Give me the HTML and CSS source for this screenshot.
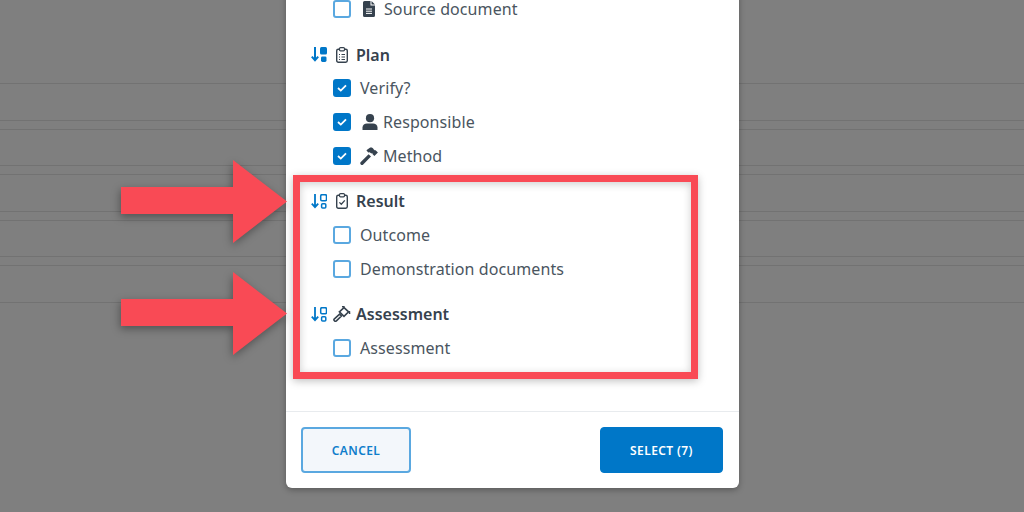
FILE: index.html
```html
<!DOCTYPE html>
<html lang="en">
<head>
<meta charset="utf-8">
<title>Select columns</title>
<link rel="stylesheet" href="styles.css">
</head>
<body>
<div class="backdrop">
  <div class="row row-a"></div><div class="row row-b"></div>
  <div class="row row-a"></div><div class="row row-b"></div>
  <div class="row row-a"></div><div class="row row-b"></div>
  <div class="row row-a"></div><div class="row row-b"></div>
  <div class="row row-a"></div><div class="row row-b"></div>
</div>

<section class="dialog">
  <div class="list">
    <div class="item item-first"><span class="box"></span>
      <svg class="ico ico-doc" viewBox="0 0 12 16"><path d="M1.5 0H7.5V4.5H12V14.5A1.5 1.5 0 0 1 10.5 16H1.5A1.5 1.5 0 0 1 0 14.5V1.5A1.5 1.5 0 0 1 1.5 0ZM8.5 0L12 3.5H8.5Z" fill="#36424e"/><path d="M3 8H9M3 10.2H9M3 12.4H9" stroke="#fff" stroke-width="1"/></svg>
      <span>Source document</span></div>

    <div class="group">
      <svg class="sort" viewBox="0 0 16 15"><path d="M4 0V13M0.8 9.6L4 13.2L7.2 9.6" fill="none" stroke="#0077c8" stroke-width="2"/><rect x="9" y="0" width="7" height="7.5" rx="1.5" fill="#0077c8"/><rect x="10" y="9.4" width="5.5" height="5.5" rx="1.4" fill="#0077c8"/></svg>
      <svg class="clip" viewBox="0 0 12 16"><rect x="0.7" y="2.2" width="10.6" height="13" rx="1.6" fill="none" stroke="#36424e" stroke-width="1.4"/><rect x="3.5" y="0.6" width="5" height="3.2" rx="1" fill="#fff" stroke="#36424e" stroke-width="1.2"/><path d="M3 7.5H4M5.5 7.5H9M3 10H4M5.5 10H9M3 12.5H4M5.5 12.5H9" stroke="#36424e" stroke-width="1"/></svg>
      <span>Plan</span>
    </div>
    <div class="item"><span class="box on"><svg viewBox="0 0 10 8"><path d="M1 4L3.8 6.6L9 1.4" fill="none" stroke="#fff" stroke-width="1.8"/></svg></span><span class="plain">Verify?</span></div>
    <div class="item"><span class="box on"><svg viewBox="0 0 10 8"><path d="M1 4L3.8 6.6L9 1.4" fill="none" stroke="#fff" stroke-width="1.8"/></svg></span>
      <svg class="ico ico-user" viewBox="0 0 15 16"><circle cx="7.5" cy="4.2" r="4.1" fill="#36424e"/><path d="M0 16V13.5C0 11 2.2 9.6 4.5 9.6H10.5C12.8 9.6 15 11 15 13.5V16Z" fill="#36424e"/></svg>
      <span>Responsible</span></div>
    <div class="item"><span class="box on"><svg viewBox="0 0 10 8"><path d="M1 4L3.8 6.6L9 1.4" fill="none" stroke="#fff" stroke-width="1.8"/></svg></span>
      <svg class="ico ico-hammer" viewBox="0 0 18 18"><path d="M0.8 15L8.6 7.2L11 9.6L3.2 17.4A1.6 1.6 0 0 1 0.8 15Z" fill="#36424e"/><path d="M6.4 3.2L10.2 0.6C11.6 0.2 13 0.8 13.6 2.2L14.6 3.2L15.6 3.2L17.9 5.6L14.4 9.1L12.4 7L12.4 5.9L11.4 6.4L9.6 5.2L8.2 5.4Z" fill="#36424e"/></svg>
      <span>Method</span></div>

    <div class="group">
      <svg class="sort" viewBox="0 0 16 15"><path d="M4 0V13M0.8 9.6L4 13.2L7.2 9.6" fill="none" stroke="#0077c8" stroke-width="1.8"/><rect x="9.7" y="0.7" width="5.8" height="6" rx="1.2" fill="none" stroke="#0077c8" stroke-width="1.5"/><rect x="10.6" y="9.8" width="4.2" height="4.2" rx="1" fill="none" stroke="#0077c8" stroke-width="1.5"/></svg>
      <svg class="clip" viewBox="0 0 12 16"><rect x="0.7" y="2.2" width="10.6" height="13" rx="1.6" fill="none" stroke="#36424e" stroke-width="1.4"/><rect x="3.5" y="0.6" width="5" height="3.2" rx="1" fill="#fff" stroke="#36424e" stroke-width="1.2"/><path d="M3.4 9.4L5.3 11.3L8.8 7.4" fill="none" stroke="#36424e" stroke-width="1.3"/></svg>
      <span>Result</span>
    </div>
    <div class="item"><span class="box"></span><span class="plain">Outcome</span></div>
    <div class="item"><span class="box"></span><span class="plain">Demonstration documents</span></div>

    <div class="group">
      <svg class="sort" viewBox="0 0 16 15"><path d="M4 0V13M0.8 9.6L4 13.2L7.2 9.6" fill="none" stroke="#0077c8" stroke-width="1.8"/><rect x="9.7" y="0.7" width="5.8" height="6" rx="1.2" fill="none" stroke="#0077c8" stroke-width="1.5"/><rect x="10.6" y="9.8" width="4.2" height="4.2" rx="1" fill="none" stroke="#0077c8" stroke-width="1.5"/></svg>
      <svg class="gavel" viewBox="0 0 18 16"><path d="M1.4 12.8L6.6 8.2L8.4 10L3.4 14.8A1.4 1.4 0 0 1 1.4 12.8Z" fill="none" stroke="#36424e" stroke-width="1.6"/><path d="M6.4 5.8L11 1.6L15.6 5.8L11 10.4Z" fill="none" stroke="#36424e" stroke-width="1.6"/><path d="M9 0.8L11.6 0.4M16.4 5L16.6 8" stroke="#36424e" stroke-width="1.5"/></svg>
      <span>Assessment</span>
    </div>
    <div class="item"><span class="box"></span><span class="plain">Assessment</span></div>
  </div>

  <footer class="actions">
    <button class="btn btn-cancel" type="button">CANCEL</button>
    <button class="btn btn-select" type="button">SELECT (7)</button>
  </footer>
</section>

<svg class="arrow arrow-one" viewBox="0 0 166 83"><path d="M0 27H112V0L166 41.5L112 83V54H0Z"/></svg>
<svg class="arrow arrow-two" viewBox="0 0 166 83"><path d="M0 27H112V0L166 41.5L112 83V54H0Z"/></svg>
<div class="highlight"></div>
</body>
</html>
```

FILE: styles.css
```css
html, body {
  margin: 0;
  padding: 0;
  height: 100%;
}
body {
  position: relative;
  width: 1024px;
  height: 512px;
  overflow: hidden;
  background: #7f7f7f;
  font-family: "Noto Sans", "Open Sans", sans-serif;
  color: #4a5560;
}
.backdrop {
  padding-top: 83.4px;
}
.row {
  box-sizing: border-box;
  border-top: 1px solid #727272;
}
.row-a { height: 36.6px; }
.row-b { height: 8.8px; }

.dialog {
  position: absolute;
  left: 286px;
  bottom: 24px;
  width: 453px;
  background: #fff;
  border-radius: 0 0 6px 6px;
  box-shadow: 0 2px 6px rgba(0, 0, 0, .3);
}
.list {
  padding: 0 15px 46px 25px;
}
.item, .group {
  display: flex;
  align-items: center;
  height: 33.8px;
  font-size: 16px;
}
.item {
  padding-left: 22px;
  letter-spacing: .09px;
}
.group {
  margin-top: 11.6px;
  font-weight: 600;
  color: #36424e;
}
.box {
  flex: none;
  box-sizing: border-box;
  width: 18px;
  height: 18px;
  border: 2px solid #5aa8e0;
  border-radius: 3px;
  background: #fff;
  display: flex;
  align-items: center;
  justify-content: center;
}
.box.on {
  background: #0077c8;
  border-color: #0077c8;
}
.box svg {
  width: 10px;
  height: 8px;
}
.plain {
  margin-left: 9px;
}
.ico {
  flex: none;
}
.ico-doc { width: 12px; height: 16px; margin-left: 12px; margin-right: 9px; }
.ico-user { width: 16px; height: 16px; margin-left: 11px; margin-right: 5px; }
.ico-hammer { width: 18px; height: 18px; margin-left: 9px; margin-right: 5px; }
.sort {
  flex: none;
  width: 16px;
  height: 15px;
}
.clip {
  flex: none;
  width: 12px;
  height: 16px;
  margin-left: 9px;
  margin-right: 8px;
}
.gavel {
  flex: none;
  width: 18px;
  height: 16px;
  margin-left: 6px;
  margin-right: 5px;
}
.actions {
  display: flex;
  justify-content: space-between;
  padding: 15px 16px 15px 15px;
  border-top: 1px solid #e8ebee;
}
.btn {
  height: 46px;
  font-family: inherit;
  font-size: 12px;
  font-weight: 600;
  letter-spacing: .4px;
  border-radius: 4px;
}
.btn-cancel {
  width: 110px;
  color: #0f7ecb;
  background: #f3f7fb;
  border: 2px solid #5aa8e0;
}
.btn-select {
  width: 123px;
  color: #fff;
  background: #0077c8;
  border: 1px solid #0077c8;
}
.arrow {
  position: absolute;
  left: 121px;
  width: 166px;
  height: 83px;
  fill: #f94a55;
  filter: drop-shadow(-1px 3px 4px rgba(0, 0, 0, .35));
}
.arrow-one { top: 160px; }
.arrow-two { top: 272px; }
.highlight {
  position: absolute;
  left: 293px;
  top: 175px;
  width: 405px;
  height: 204px;
  box-sizing: border-box;
  border: 7px solid #f94a55;
  box-shadow: 0 2px 8px rgba(0, 0, 0, .25), inset 0 2px 8px rgba(0, 0, 0, .2);
}
```
